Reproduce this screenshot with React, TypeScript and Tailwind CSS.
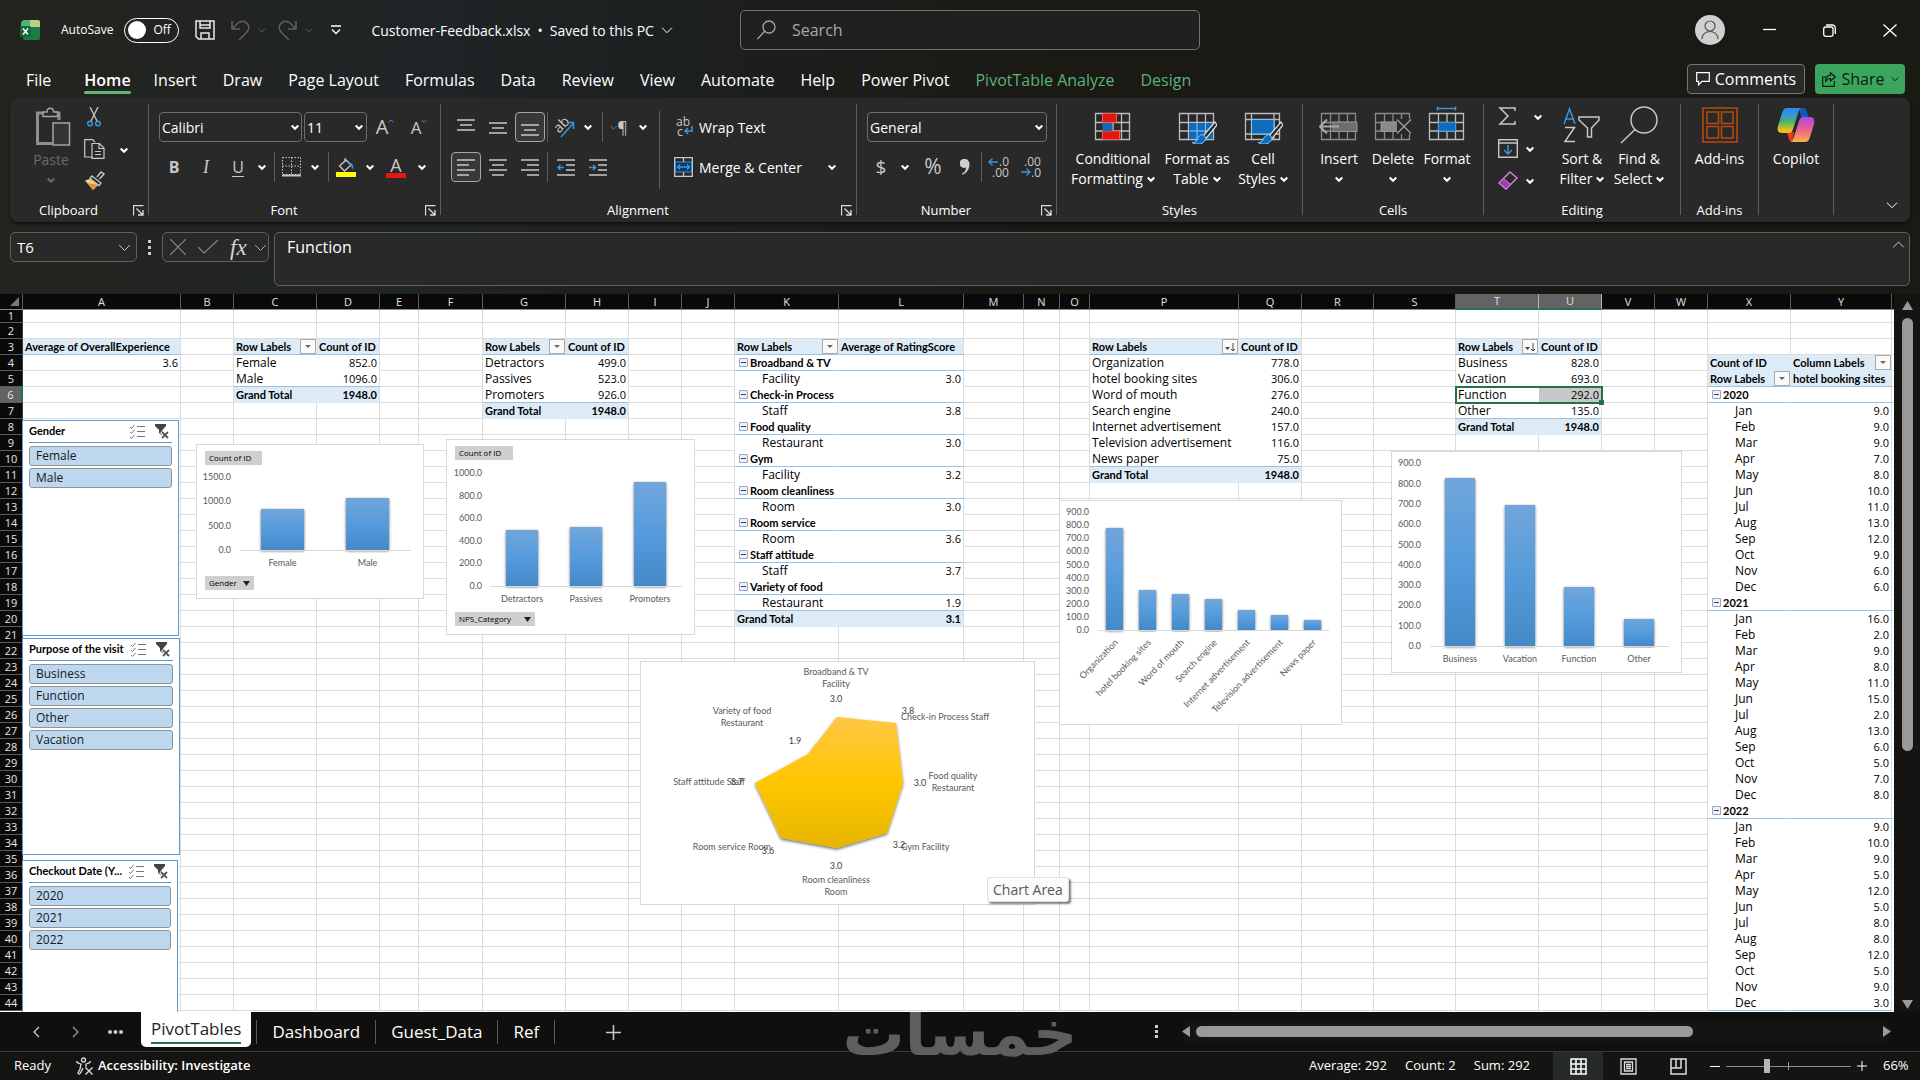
import React from "react";

type Kind = "body" | "edge" | "head" | "headTop" | "total" | "group";
type Cell = { v: string; k: Kind; btn?: "drop" | "sort"; indent?: boolean };

const COLS: [string, number][] = [
  ["A", 158], ["B", 53], ["C", 83], ["D", 63], ["E", 39], ["F", 64], ["G", 83], ["H", 63], ["I", 53],
  ["J", 53], ["K", 104], ["L", 125], ["M", 60], ["N", 36], ["O", 30], ["P", 149], ["Q", 63], ["R", 72],
  ["S", 82], ["T", 83], ["U", 63], ["V", 53], ["W", 53], ["X", 83], ["Y", 101],
];

const cells: Record<string, Cell> = {};

function pivot(a: string, b: string, start: number, btn: "drop" | "sort", heads: [string, string], rows: [string, string][]) {
  cells[a + start] = { v: heads[0], k: "head", btn };
  cells[b + start] = { v: heads[1], k: "head" };
  rows.forEach(([l, v], i) => {
    const r = start + 1 + i;
    const last = i === rows.length - 1;
    const group = v === "";
    const k: Kind = last ? "total" : group ? "group" : i === rows.length - 2 ? "edge" : "body";
    cells[a + r] = { v: l.trim(), k, indent: l.startsWith(" ") };
    cells[b + r] = { v, k };
  });
}

cells.A3 = { v: "Average of OverallExperience", k: "head" };
pivot("C", "D", 3, "drop", ["Row Labels", "Count of ID"], [["Female", "852.0"], ["Male", "1096.0"], ["Grand Total", "1948.0"]]);
pivot("G", "H", 3, "drop", ["Row Labels", "Count of ID"], [["Detractors", "499.0"], ["Passives", "523.0"], ["Promoters", "926.0"], ["Grand Total", "1948.0"]]);
pivot("K", "L", 3, "drop", ["Row Labels", "Average of RatingScore"], [
  ["Broadband & TV", ""], [" Facility", "3.0"], ["Check-in Process", ""], [" Staff", "3.8"], ["Food quality", ""], [" Restaurant", "3.0"],
  ["Gym", ""], [" Facility", "3.2"], ["Room cleanliness", ""], [" Room", "3.0"], ["Room service", ""], [" Room", "3.6"],
  ["Staff attitude", ""], [" Staff", "3.7"], ["Variety of food", ""], [" Restaurant", "1.9"], ["Grand Total", "3.1"],
]);
pivot("P", "Q", 3, "sort", ["Row Labels", "Count of ID"], [
  ["Organization", "778.0"], ["hotel booking sites", "306.0"], ["Word of mouth", "276.0"], ["Search engine", "240.0"],
  ["Internet advertisement", "157.0"], ["Television advertisement", "116.0"], ["News paper", "75.0"], ["Grand Total", "1948.0"],
]);
pivot("T", "U", 3, "sort", ["Row Labels", "Count of ID"], [["Business", "828.0"], ["Vacation", "693.0"], ["Function", "292.0"], ["Other", "135.0"], ["Grand Total", "1948.0"]]);

const MONTHS = ["Jan", "Feb", "Mar", "Apr", "May", "Jun", "Jul", "Aug", "Sep", "Oct", "Nov", "Dec"];
const YEARS: [string, number[]][] = [
  ["2020", [9, 9, 9, 7, 8, 10, 11, 13, 12, 9, 6, 6]],
  ["2021", [16, 2, 9, 8, 11, 15, 2, 13, 6, 5, 7, 8]],
  ["2022", [9, 10, 9, 5, 12, 5, 8, 8, 12, 5, 9, 3]],
];
cells.X4 = { v: "Count of ID", k: "headTop" };
cells.Y4 = { v: "Column Labels", k: "headTop", btn: "drop" };
cells.X5 = { v: "Row Labels", k: "head", btn: "drop" };
cells.Y5 = { v: "hotel booking sites", k: "head" };
YEARS.forEach(([y, vals], yi) => {
  const r0 = 6 + yi * 13;
  cells["X" + r0] = { v: y, k: "group" };
  cells["Y" + r0] = { v: "", k: "group" };
  vals.forEach((n, i) => {
    const k: Kind = yi === 2 && i === 11 ? "edge" : "body";
    cells["X" + (r0 + 1 + i)] = { v: MONTHS[i], k, indent: true };
    cells["Y" + (r0 + 1 + i)] = { v: n.toFixed(1), k };
  });
});

const KIND: Record<Kind, string> = {
  body: "border-b-white text-[12px]",
  edge: "border-b-[#9bc2e6] text-[12px]",
  head: "bg-[#ddebf7] border-b-[#9bc2e6] font-[Lato] text-[11px] font-bold",
  headTop: "bg-[#ddebf7] border-b-[#ddebf7] font-[Lato] text-[11px] font-bold",
  total: "bg-[#ddebf7] border-b-[#ddebf7] font-[Lato] text-[11px] font-bold",
  group: "border-b-[#9bc2e6] font-[Lato] text-[11px] font-bold",
};
const FIRST = "ACGKPTX";

function SheetCell({ id, col }: { id: string; col: string }) {
  if (id === "A4") return <td className="h-4 border-r border-b border-[#dcdcdc] pr-[2px] text-right text-[11px] leading-[15px]">3.6</td>;
  const c = cells[id];
  if (!c) return <td className="border-r border-b border-[#dcdcdc] p-0" />;
  const left = FIRST.includes(col);
  const header = c.k === "head" || c.k === "headTop";
  const numeric = !left && !header;
  const right = left && id !== "A3" ? (header || c.k === "total" ? "border-r-[#ddebf7]" : "border-r-white") : "border-r-[#dcdcdc]";
  return (
    <td className={`border-r border-b p-0 leading-[15px] whitespace-nowrap ${KIND[c.k]} ${right} ${id === "U6" ? "bg-[#c8c8c8]" : ""}`}>
      <div className={`flex h-[15px] items-center ${numeric ? "justify-end pr-[2px] text-[11px]" : header ? "justify-between pl-[2px]" : left && c.k === "group" ? "gap-[2px] pl-1" : c.indent ? "pl-[27px]" : "pl-[2px]"}`}>
        {left && c.k === "group" && (
          <button aria-label={"Collapse " + c.v} className="mb-px flex size-[9px] shrink-0 items-center justify-center rounded-[1px] border border-[#9aa7b8] bg-[#eef2f8]">
            <span className="h-px w-[5px] bg-[#1f3f8f]" />
          </button>
        )}
        <span>{c.v}</span>
        {c.btn && (
          <button aria-label={"Filter " + c.v} className="flex h-[15px] w-4 shrink-0 items-center justify-center border border-[#ababab] bg-[#fafafa]">
            {c.btn === "drop" ? (
              <svg width="8" height="4" viewBox="0 0 8 4"><path d="M1 0h6L4 3z" fill="#666" /></svg>
            ) : (
              <svg width="11" height="10" viewBox="0 0 11 10"><path d="M0 5h5L2.500 8z" fill="#444" /><path d="M8 1v8M6 7l2 2 2-2" stroke="#444" fill="none" /></svg>
            )}
          </button>
        )}
      </div>
    </td>
  );
}

function Sheet() {
  return (
    <table className="w-full table-fixed border-separate border-spacing-0 bg-white text-black">
      <colgroup>
        <col className="w-[23px]" />
        {COLS.map(([c, w]) => <col key={c} style={{ width: w }} />)}
        <col />
      </colgroup>
      <thead>
        <tr className="h-4 bg-[#0a0a0a] text-[11px] leading-[15px] text-[#e0e0e0]">
          <th className="border-r border-b border-r-[#5a5a5a] border-b-[#8a8a8a] p-0">
            <svg className="mr-[3px] ml-auto" width="9" height="9" viewBox="0 0 9 9"><path d="M9 0v9H0z" fill="#7a7a7a" /></svg>
          </th>
          {COLS.map(([c]) => (
            <th key={c} scope="col" className={`border-r p-0 font-normal ${c === "T" || c === "U" ? "border-b-2 border-r-[#b5b5b5] border-b-[#217346] bg-[#636363] leading-[14px]" : "border-b border-r-[#5a5a5a] border-b-[#8a8a8a]"}`}>{c}</th>
          ))}
          <th className="border-b border-b-[#8a8a8a] p-0" />
        </tr>
      </thead>
      <tbody>
        {Array.from({ length: 44 }, (_, i) => i + 1).map((r) => (
          <tr key={r} className={r === 1 ? "h-[13px]" : "h-4"}>
            <th scope="row" className={`border-r border-b border-b-[#5a5a5a] p-0 text-center text-[11px] font-normal text-[#e6e6e6] ${r === 1 ? "leading-[12px]" : "leading-[15px]"} ${r === 6 ? "border-r-2 border-r-[#217346] bg-[#636363]" : "border-r-[#3a3a3a] bg-[#0a0a0a]"}`}>{r}</th>
            {COLS.map(([c]) => <SheetCell key={c} id={c + r} col={c} />)}
            <td className="border-b border-[#dcdcdc] p-0" />
          </tr>
        ))}
      </tbody>
    </table>
  );
}

function Slicer({ title, items, place }: { title: string; items: string[]; place: string }) {
  return (
    <section aria-label={title} className={`absolute left-[22px] border border-[#5b9bd5] bg-white px-[6px] text-black ${place}`}>
      <div className="flex h-[22px] items-center border-b border-[#5b9bd5]">
        <h2 className="flex-1 truncate font-[Lato] text-[11px] font-bold">{title}</h2>
        <button aria-label="Multi-select" className="mr-2">
          <svg width="17" height="15" viewBox="0 0 17 15" fill="none" stroke="#777"><path d="M1 3l1.500 1.500L5.500 1M1 8l1.500 1.500L5.500 6M1 13l1.500 1.500L5.500 11M8 2.500h8M8 7.500h8M8 12.500h8" /></svg>
        </button>
        <button aria-label="Clear filter" className="mr-[2px]">
          <svg width="16" height="15" viewBox="0 0 16 15"><path d="M1 0h11v2L8.500 6v6L5 9V6L1 2z" fill="#444" /><path d="M7.500 7.500l7 7M14.500 7.500l-7 7" stroke="#fff" strokeWidth="4" /><path d="M8 8l6 6M14 8l-6 6" stroke="#555" strokeWidth="1.800" /></svg>
        </button>
      </div>
      <div className="flex flex-col gap-[2px] pt-[3px]">
        {items.map((t) => (
          <button key={t} className="h-5 rounded-[3px] border border-[#8f959b] bg-[#bdd7ee] pl-[6px] text-left text-[12px] leading-[18px] text-[#1a1a1a]">{t}</button>
        ))}
      </div>
    </section>
  );
}

type Bar = { x: number; top: number; label: string };
type ChartProps = {
  name: string; place: string; w: number; h: number; ticks: string[]; tickX: number; y0: number; step: number;
  axis: [number, number]; barW: number; bars: Bar[]; slant?: boolean; children?: React.ReactNode;
};

function BarChart({ name, place, w, h, ticks, tickX, y0, step, axis, barW, bars, slant, children }: ChartProps) {
  const id = "g" + name;
  return (
    <div className={`absolute border border-[#d9d9d9] bg-white ${place}`}>
      <svg width={w} height={h} viewBox={`0 0 ${w} ${h}`} role="img" aria-label={name + " chart"} fontFamily="Lato, sans-serif" fontSize="9" fill="#595959">
        <defs>
          <linearGradient id={id} x1="0" y1="0" x2="0" y2="1"><stop offset="0" stopColor="#71a6db" /><stop offset=".5" stopColor="#559bdb" /><stop offset="1" stopColor="#438ac9" /></linearGradient>
          <filter id={id + "s"} x="-20%" y="-5%" width="140%" height="110%"><feDropShadow dx="0" dy="1" stdDeviation="1.500" floodOpacity=".6" /></filter>
        </defs>
        {ticks.map((t, i) => <text key={t} x={tickX} y={y0 - i * step + 3} textAnchor="end">{t}</text>)}
        {bars.map((b) => <rect key={b.label} x={b.x} y={b.top} width={barW} height={y0 - b.top} fill={`url(#${id})`} filter={`url(#${id}s)`} />)}
        <path d={`M${axis[0]} ${y0 + 0.5}H${axis[1]}`} stroke="#d9d9d9" />
        {bars.map((b) => slant
          ? <text key={b.label} x={b.x + barW / 2 + 4} y={y0 + 13} textAnchor="end" transform={`rotate(-46 ${b.x + barW / 2 + 4} ${y0 + 13})`}>{b.label}</text>
          : <text key={b.label} x={b.x + barW / 2} y={y0 + 16} textAnchor="middle">{b.label}</text>)}
      </svg>
      {children}
    </div>
  );
}

function FieldButton({ text, drop, place }: { text: string; drop?: boolean; place: string }) {
  return (
    <button className={`absolute flex h-[14px] items-center justify-between bg-[#cfcfcf] px-1 text-[8px] leading-none text-black ${place}`}>
      <span>{text}</span>
      {drop && <svg width="7" height="5" viewBox="0 0 7 5"><path d="M0 0h7L3.500 5z" fill="#222" /></svg>}
    </button>
  );
}

const RADAR: [number, number, string, "start" | "middle" | "end"][] = [
  [195, 14, "Broadband & TV", "middle"], [195, 26, "Facility", "middle"], [195, 41, "3.0", "middle"],
  [267, 53, "3.8", "middle"], [260, 59, "Check-in Process Staff", "start"],
  [312, 118, "Food quality", "middle"], [312, 130, "Restaurant", "middle"], [279, 125, "3.0", "middle"],
  [258, 187, "3.2", "middle"], [260, 189, "Gym Facility", "start"],
  [195, 208, "3.0", "middle"], [195, 222, "Room cleanliness", "middle"], [195, 234, "Room", "middle"],
  [130, 189, "Room service Room", "end"], [127, 193, "3.6", "middle"],
  [104, 124, "Staff attitude Staff", "end"], [96, 124, "3.7", "middle"],
  [154, 83, "1.9", "middle"], [101, 53, "Variety of food", "middle"], [101, 65, "Restaurant", "middle"],
];

function RadarChart() {
  return (
    <div className="absolute top-[367px] left-[640px] border border-[#d9d9d9] bg-white">
      <svg width="393" height="242" viewBox="0 0 393 242" role="img" aria-label="Rating by category chart" fontFamily="Lato, sans-serif" fontSize="9" fill="#595959">
        <defs>
          <linearGradient id="gold" x1="0" y1="0" x2="0" y2="1"><stop offset="0" stopColor="#ffc746" /><stop offset=".5" stopColor="#ffc600" /><stop offset="1" stopColor="#e5b600" /></linearGradient>
          <filter id="golds" x="-10%" y="-10%" width="120%" height="120%"><feDropShadow dx="0" dy="1.500" stdDeviation="1.500" floodOpacity=".6" /></filter>
        </defs>
        <path d="M196 55L255 61L262 121L246 171L196 186L140 176L114 121L167 92Z" fill="url(#gold)" filter="url(#golds)" />
        {RADAR.map(([x, y, t, a], i) => <text key={i} x={x} y={y - 1} textAnchor={a} fill={/^\d/.test(t) ? "#404040" : "#595959"}>{t}</text>)}
      </svg>
    </div>
  );
}

function Chev({ s = 8, c = "currentColor", w = 2, up }: { s?: number; c?: string; w?: number; up?: boolean }) {
  return <svg className="shrink-0" width={s} height={s} viewBox="0 0 8 8" fill="none" stroke={c} strokeWidth={(w * 8) / s}><path d={up ? "M.700 5.800L4 2.500l3.300 3.300" : "M.700 2.500L4 5.800l3.300-3.300"} /></svg>;
}

function IconBtn({ label, w = "w-8", boxed, children }: { label: string; w?: string; boxed?: boolean; children: React.ReactNode }) {
  return <button aria-label={label} className={`flex h-[30px] shrink-0 items-center justify-center rounded-[4px] ${w} ${boxed ? "border border-[#a6a6a6] bg-[#383838]" : ""}`}>{children}</button>;
}

const Div = ({ m = "" }: { m?: string }) => <span className={`h-[30px] w-px shrink-0 bg-[#5c5c5c] ${m}`} />;

function Group({ label, w, launcher, children }: { label: string; w: string; launcher?: boolean; children: React.ReactNode }) {
  return (
    <section aria-label={label || "Copilot"} className={`flex shrink-0 ${w}`}>
      <div className="flex min-w-0 flex-1 flex-col">
        <div className="flex h-[102px]">{children}</div>
        <div className="flex h-5 items-center">
          <h2 className={`flex-1 text-center text-[13px] leading-5 ${launcher ? "pr-[6px]" : ""}`}>{label}</h2>
          {launcher && (
            <button aria-label={label + " settings"} className="mr-1">
              <svg width="11" height="11" viewBox="0 0 11 11" fill="none" stroke="#ddd"><path d="M.500 10.500V.500h10M3.500 3.500l6 6M10 5v5H5" strokeWidth="1.300" /></svg>
            </button>
          )}
        </div>
      </div>
      <span className="mt-[6px] h-[111px] w-px bg-[#5c5c5c]" />
    </section>
  );
}

function BigBtn({ icon, lines, w, chev, below }: { icon: React.ReactNode; lines: string[]; w: string; chev?: boolean; below?: boolean }) {
  return (
    <button className={`flex shrink-0 flex-col items-center pt-[7px] text-[14px] leading-5 ${w}`}>
      <span className="mb-1 flex h-10 items-center justify-center">{icon}</span>
      {lines.map((l, i) => (
        <span key={l} className="flex items-center gap-1 whitespace-nowrap">{l}{chev && i === lines.length - 1 && <Chev />}</span>
      ))}
      {below && <span className="pt-[6px]"><Chev /></span>}
    </button>
  );
}

const G = "#c8c8c8";
const B = "#3a96dd";

const Lines = ({ d }: { d: string }) => <svg width="18" height="18" viewBox="0 0 18 18" stroke={G} strokeWidth="1.500"><path d={d} /></svg>;

const GridIcon = ({ children, dim }: { children?: React.ReactNode; dim?: boolean }) => (
  <svg width="40" height="38" viewBox="0 0 40 38" fill="none">
    <path d="M2.500 7.500h34v26h-34zM11.500 7.500v26M28.500 7.500v26M20 7.500v26M2.500 16.500h34M2.500 25h34" stroke={dim ? "#8a8a8a" : "#bdbdbd"} strokeWidth="1.300" />
    {children}
  </svg>
);
const Brush = () => (
  <g><path d="M38 16L26 30l3 2.500L40 19z" fill="#292929" stroke="#e0e0e0" strokeWidth="1.200" /><path d="M27 29c-4-1-6 2-7 5-1 2-3 2.500-5 2.500 5 3 12 2 14-4z" fill="#0f6cbd" stroke="#8cc4f0" strokeWidth="1" /></g>
);

function Ribbon() {
  return (
    <div className="mx-[10px] flex h-[124px] rounded-lg bg-[#292929] text-white shadow-[0_2px_3px_rgba(0,0,0,0.500)]">
      <Group label="Clipboard" w="w-[139px]" launcher>
        <button disabled className="ml-[19px] flex w-11 flex-col items-center pt-[9px] text-[14px] leading-5 text-[#6b6b6b]">
          <svg className="ml-[3px]" width="36" height="41" viewBox="0 0 36 41" fill="none" stroke="#a6a6a6"><path d="M8 6H2.500v30.500H17M24 13V6h-5" strokeWidth="3" stroke="#8f8f8f" /><path d="M8 9.500V5h4c0-5 6.500-5 6.500 0h4v4.500z" strokeWidth="1.400" fill="#292929" /><rect x="18" y="16" width="16.500" height="22" fill="#333" strokeWidth="1.500" /></svg>
          <span className="pt-[2px]">Paste</span>
          <span className="pt-[6px]"><Chev c="#6b6b6b" /></span>
        </button>
        <div className="ml-[10px] flex flex-col gap-3 pt-[9px]">
          <button aria-label="Cut" className="flex h-5 w-[22px] items-center justify-center"><svg width="14" height="20" viewBox="0 0 14 20" fill="none"><path d="M3 0l7 14M11 0L4 14" stroke={G} strokeWidth="1.300" /><circle cx="3" cy="16.500" r="2.300" stroke={B} strokeWidth="1.500" /><circle cx="11" cy="16.500" r="2.300" stroke={B} strokeWidth="1.500" /></svg></button>
          <button aria-label="Copy" className="flex h-5 w-[22px] items-center justify-center"><svg width="21" height="20" viewBox="0 0 21 20" fill="none" stroke={G} strokeWidth="1.200"><path d="M8 18H.700V.700h8L11 3M8 4.500h7.500l4.500 4.500v10.300H8zM15 4.500V9.500h5M11 12.500h6M11 15.500h6" /></svg></button>
          <button aria-label="Format Painter" className="flex h-5 w-[22px] items-center justify-center"><svg width="21" height="20" viewBox="0 0 21 20" fill="none"><path d="M13 6l4-5 3 2-4.500 5" stroke={G} strokeWidth="1.400" /><path d="M8 5l9 7-2 2.500L6 7.500z" stroke={G} strokeWidth="1.300" fill="#292929" /><path d="M5.500 8L1 9.500l8 9.500 5-5z" fill="#f3d27a" /><path d="M4 12l10 2-5 5z" fill="#e8912d" /></svg></button>
        </div>
        <button aria-label="Copy options" className="mt-10 ml-[11px] flex h-6 w-4 items-center justify-center"><Chev /></button>
      </Group>

      <Group label="Font" w="w-[292px]" launcher>
        <div className="flex flex-col gap-[10px] pt-[14px]">
          <div className="flex pl-[10px]">
            <label className="relative mr-[2px] flex items-center">
              <select aria-label="Font" className="h-[30px] w-[143px] appearance-none rounded-[4px] border border-[#6e6e6e] px-[2px] text-[14px]"><option>Calibri</option></select>
              <span className="pointer-events-none absolute right-[3px]"><Chev /></span>
            </label>
            <label className="relative flex items-center">
              <select aria-label="Font size" className="h-[30px] w-[63px] appearance-none rounded-[4px] border border-[#6e6e6e] px-[2px] text-[14px]"><option>11</option></select>
              <span className="pointer-events-none absolute right-[4px]"><Chev /></span>
            </label>
            <IconBtn label="Increase font size" w="w-9"><span className="text-[20px] leading-none text-[#c8c8c8]">A</span><span className="mb-3"><Chev s={6} c={B} w={1} up /></span></IconBtn>
            <IconBtn label="Decrease font size" w="w-8"><span className="text-[17px] leading-none text-[#c8c8c8]">A</span><span className="mb-3"><Chev s={6} c={B} w={1} /></span></IconBtn>
          </div>
          <div className="flex pl-[9px] text-[16px] text-[#c8c8c8]">
            <IconBtn label="Bold"><b>B</b></IconBtn>
            <IconBtn label="Italic"><i className="font-['Liberation_Serif'] text-[18px]">I</i></IconBtn>
            <IconBtn label="Underline"><span className="border-b border-[#c8c8c8] leading-[18px]">U</span></IconBtn>
            <IconBtn label="Underline options" w="w-4"><Chev c="#fff" /></IconBtn>
            <Div m="mx-1" />
            <IconBtn label="Borders" w="w-6"><svg width="19" height="20" viewBox="0 0 19 20" stroke={G} fill="none"><path d="M.500.500h18v17H.500zM9.500.500v17M.500 9h18" strokeDasharray="1.500 1.500" /><path d="M0 18.500h19" strokeWidth="2" /></svg></IconBtn>
            <IconBtn label="Border options" w="w-6"><Chev c="#fff" /></IconBtn>
            <Div m="mx-[1px]" />
            <IconBtn label="Fill color"><svg width="20" height="20" viewBox="0 0 20 20" fill="none"><path d="M9 1v4M10 3L3.500 9l5 5L15 8z" stroke={G} strokeWidth="1.300" /><path d="M13 6c3-1 5 2 4 7l-2-4z" fill={B} /><path d="M0 15h20v5H0z" fill="#ff0" /></svg></IconBtn>
            <IconBtn label="Fill color options" w="w-4"><Chev c="#fff" /></IconBtn>
            <IconBtn label="Font color" w="w-9"><span className="flex w-5 flex-col items-center border-b-[5px] border-[#e3170d] text-[18px] leading-[16px]">A</span></IconBtn>
            <IconBtn label="Font color options" w="w-4"><Chev c="#fff" /></IconBtn>
          </div>
        </div>
      </Group>

      <Group label="Alignment" w="w-[416px]" launcher>
        <div className="flex flex-col gap-[10px] pt-[14px] pl-[10px]">
          <div className="flex gap-[2px]">
            <IconBtn label="Top align" w="w-[30px]"><Lines d="M0 2h18M3 7h12M0 12h18" /></IconBtn>
            <IconBtn label="Middle align" w="w-[30px]"><Lines d="M0 5h18M3 10h12M0 15h18" /></IconBtn>
            <IconBtn label="Bottom align" w="w-[30px]" boxed><Lines d="M0 7h18M3 12h12M0 17h18" /></IconBtn>
            <Div />
            <div className="flex">
              <IconBtn label="Orientation" w="w-7"><svg className="overflow-visible" width="22" height="22" viewBox="0 0 22 22" fill="none"><text x="1" y="14" fontSize="14" fill={G} transform="rotate(-45 8 10)">ab</text><path d="M8 21L20 7.500M14 6.500h6.500V13" stroke={B} strokeWidth="1.500" /></svg></IconBtn>
              <IconBtn label="Orientation options" w="w-5"><Chev /></IconBtn>
              <Div m="ml-1" />
              <IconBtn label="Text direction"><Chev s={7} c={B} w={1} /><span className="text-[16px] text-[#c8c8c8]">¶</span></IconBtn>
              <IconBtn label="Text direction options" w="w-4"><Chev /></IconBtn>
            </div>
          </div>
          <div className="flex gap-[2px]">
            <IconBtn label="Align left" w="w-[30px]" boxed><Lines d="M0 2h18M0 7h12M0 12h18M0 17h12" /></IconBtn>
            <IconBtn label="Center" w="w-[30px]"><Lines d="M0 2h18M3 7h12M0 12h18M3 17h12" /></IconBtn>
            <IconBtn label="Align right" w="w-[30px]"><Lines d="M0 2h18M6 7h12M0 12h18M6 17h12" /></IconBtn>
            <Div />
            <div className="flex">
              <IconBtn label="Decrease indent"><svg width="18" height="18" viewBox="0 0 18 18" fill="none" strokeWidth="1.500"><path d="M0 2h18M9 7h9M9 12h9M0 17h18" stroke={G} /><path d="M7 9.500H1M3.500 7L1 9.500 3.500 12" stroke={B} /></svg></IconBtn>
              <IconBtn label="Increase indent"><svg width="18" height="18" viewBox="0 0 18 18" fill="none" strokeWidth="1.500"><path d="M0 2h18M9 7h9M9 12h9M0 17h18" stroke={G} /><path d="M0 9.500h6M4 7l2.500 2.500L4 12" stroke={B} /></svg></IconBtn>
            </div>
          </div>
        </div>
        <span className="mt-[13px] ml-2 h-[78px] w-px bg-[#5c5c5c]" />
        <div className="flex flex-col gap-[10px] pt-[14px] pl-[14px] text-[14px]">
          <button className="flex h-[30px] items-center gap-[6px]">
            <svg className="overflow-visible" width="19" height="20" viewBox="0 0 19 20" fill="none"><text x="2" y="9" fontSize="12" fill={G}>ab</text><text x="3" y="19" fontSize="12" fill={G}>c</text><path d="M18 9v5H11M14 11l-3 3 3 3" stroke={B} strokeWidth="1.500" /></svg>
            Wrap Text
          </button>
          <div className="flex items-center">
            <button className="flex h-[30px] items-center gap-[6px]">
              <svg width="19" height="20" viewBox="0 0 19 20" fill="none" stroke={G}><path d="M.700.700h17.600v18.600H.700zM9.500 0v5M9.500 15v5" strokeWidth="1.300" /><rect x="1.500" y="5" width="16" height="10" stroke={B} fill="#0b3a63" /><path d="M4 10h11M6 7.500L3.500 10 6 12.500M13 7.500l2.500 2.500-2.500 2.500" stroke={B} strokeWidth="1.300" /></svg>
              Merge & Center
            </button>
            <button aria-label="Merge options" className="ml-[22px] flex size-4 items-center justify-center"><Chev /></button>
          </div>
        </div>
      </Group>

      <Group label="Number" w="w-[200px]" launcher>
        <div className="flex flex-col gap-[10px] pt-[14px] pl-[10px]">
          <label className="relative flex items-center">
            <select aria-label="Number format" className="h-[30px] w-[180px] appearance-none rounded-[4px] border border-[#6e6e6e] px-[2px] text-[14px]"><option>General</option></select>
            <span className="pointer-events-none absolute right-1"><Chev /></span>
          </label>
          <div className="flex pl-[2px] text-[#c8c8c8]">
            <IconBtn label="Accounting format" w="w-6"><span className="text-[19px]">$</span></IconBtn>
            <IconBtn label="Accounting options" w="w-6"><Chev c="#fff" /></IconBtn>
            <IconBtn label="Percent style"><span className="text-[21px]">%</span></IconBtn>
            <IconBtn label="Comma style"><svg width="10" height="16" viewBox="0 0 10 16" fill="#d0d0d0"><path d="M5 0a4.500 4.500 0 1 0 1 8.500C6 12 4 13.500 2 14.500l.500 1.200C7 14 9.500 10 9.500 5 9.500 2 7.500 0 5 0z" /></svg></IconBtn>
            <Div />
            <IconBtn label="Increase decimal"><svg className="overflow-visible" width="21" height="20" viewBox="0 0 21 20" fill="none"><path d="M10 5H1M4.500 1.500L1 5l3.500 3.500" stroke={B} strokeWidth="1.300" /><text x="11" y="9" fontSize="12" fill={G}>.0</text><text x="4" y="20" fontSize="12" fill={G}>.00</text></svg></IconBtn>
            <IconBtn label="Decrease decimal"><svg className="overflow-visible" width="21" height="20" viewBox="0 0 21 20" fill="none"><path d="M1 15h9M6.500 11.500L10 15l-3.500 3.500" stroke={B} strokeWidth="1.300" /><text x="4" y="9" fontSize="12" fill={G}>.00</text><text x="11" y="20" fontSize="12" fill={G}>.0</text></svg></IconBtn>
          </div>
        </div>
      </Group>

      <Group label="Styles" w="w-[246px]">
        <span className="w-[10px]" />
        <BigBtn w="w-[92px]" lines={["Conditional", "Formatting"]} chev icon={<GridIcon><path d="M9.500 7.500h14v9h-14zM9.500 25h17v8.500h-17z" fill="#e3170d" stroke="#f25c54" /><path d="M9.500 17h9.500v8H9.500z" fill="#0f6cbd" /></GridIcon>} />
        <BigBtn w="w-[76px]" lines={["Format as", "Table"]} chev icon={<GridIcon><path d="M12 17h24v16H12z" fill="#0f6cbd" /><path d="M20 17v16M28.500 17v16M12 25h24" stroke="#8cc4f0" /><Brush /></GridIcon>} />
        <BigBtn w="w-[56px]" lines={["Cell", "Styles"]} chev icon={
          <svg width="40" height="38" viewBox="0 0 40 38" fill="none">
            <path d="M2.500 7.500h34v26h-34zM8.500 7.500v26M31 7.500v26M2.500 13.500h34M2.500 28h34" stroke="#bdbdbd" strokeWidth="1.300" />
            <path d="M8.500 13.500H31V28H8.500z" fill="#0f6cbd" stroke="#8cc4f0" /><Brush />
          </svg>} />
      </Group>

      <Group label="Cells" w="w-[181px]">
        <span className="w-[8px]" />
        <BigBtn w="w-[56px]" lines={["Insert"]} below icon={<GridIcon dim><path d="M14 16h24v9.500H14z" fill="#6e6e6e" stroke="#999" /><path d="M20 20.500H1M8 13.500l-7 7 7 7" stroke="#a8a8a8" strokeWidth="2" /></GridIcon>} />
        <BigBtn w="w-[52px]" lines={["Delete"]} below icon={<GridIcon dim><path d="M8 16h17v9.500H8z" fill="#8a8a8a" stroke="#999" /><path d="M24 13h14v15H24z" fill="#292929" /><path d="M24 13.500l14 14M38 13.500l-14 14" stroke="#999" strokeWidth="1.500" /></GridIcon>} />
        <BigBtn w="w-[56px]" lines={["Format"]} below icon={<GridIcon><path d="M11.500 16.500h17V25h-17z" fill="#0f6cbd" stroke={B} /><path d="M10 2.500h19M10.500.500v4M28.500.500v4" stroke={B} strokeWidth="1.500" /></GridIcon>} />
      </Group>

      <Group label="Editing" w="w-[197px]">
        <div className="flex w-[68px] flex-col gap-[13px] pt-[9px] pl-[14px]">
          <button aria-label="AutoSum" className="flex h-[19px] items-center"><svg width="20" height="19" viewBox="0 0 20 19" fill="none" stroke={G} strokeWidth="1.500"><path d="M17 4V1H2l8 8-8 8h15v-3" /></svg><span className="ml-4"><Chev /></span></button>
          <button aria-label="Fill" className="flex h-[19px] items-center"><svg width="20" height="19" viewBox="0 0 20 19" fill="none"><path d="M.700.700h18.600v17.600H.700zM.700 4h18.600" stroke={G} strokeWidth="1.400" /><path d="M10 6v9M6 11l4 4 4-4" stroke={B} strokeWidth="1.500" /></svg><span className="ml-2"><Chev /></span></button>
          <button aria-label="Clear" className="flex h-[19px] items-center"><svg width="20" height="19" viewBox="0 0 20 19"><path d="M12 1l7 6-11 11-7-6z" fill="#292929" stroke="#d68be0" strokeWidth="1.400" /><path d="M5.500 7.500L12.500 13.500 8 18l-7-6z" fill="#a33bb5" stroke="#d68be0" strokeWidth="1" /></svg><span className="ml-2"><Chev /></span></button>
        </div>
        <BigBtn w="w-[60px]" lines={["Sort &", "Filter"]} chev icon={<svg width="38" height="38" viewBox="0 0 38 38" fill="none"><path d="M1 18L6.500 3 12 18M3 13h7" stroke={B} strokeWidth="1.500" /><path d="M2 21.500h9.500L2 35.500h10" stroke={G} strokeWidth="1.500" /><path d="M16 11h20v3l-7.500 8v9h-4v-9L16 14z" stroke={G} strokeWidth="1.500" /></svg>} />
        <BigBtn w="w-[54px]" lines={["Find &", "Select"]} chev icon={<svg width="38" height="38" viewBox="0 0 38 38" fill="none" stroke={G} strokeWidth="1.500"><circle cx="24" cy="14" r="13" /><path d="M15 23.500L1 37" /></svg>} />
      </Group>

      <Group label="Add-ins" w="w-[78px]">
        <BigBtn w="w-[77px]" lines={["Add-ins"]} icon={<svg width="36" height="36" viewBox="0 0 36 36" fill="none" stroke="#b8480f" strokeWidth="1.600"><path d="M1 1h34v34H1zM5 5h11.500v11.500H5zM19.500 5H31v11.500H19.500zM5 19.500h11.500V31H5zM19.500 19.500H31V31H19.500z" /></svg>} />
      </Group>
      <Group label="" w="w-[75px]">
        <BigBtn w="w-[74px]" lines={["Copilot"]} icon={
          <svg width="38" height="36" viewBox="0 0 38 36">
            <defs>
              <linearGradient id="cp1" x1="0" y1="0" x2="0" y2="1"><stop offset=".2" stopColor="#2f8fe8" /><stop offset=".55" stopColor="#4bb56a" /><stop offset=".9" stopColor="#f2c014" /></linearGradient>
              <linearGradient id="cp2" x1="0" y1="0" x2="0" y2="1"><stop offset=".1" stopColor="#b44fd8" /><stop offset=".5" stopColor="#ee5f8c" /><stop offset="1" stopColor="#f7b04a" /></linearGradient>
            </defs>
            <path d="M22 1h4c2 0 3.500 2 4 4l1.500 5H24z" fill="#0b5cb8" />
            <path d="M10 25h7l-1 5c0 3-1 5 1 5h-2c-2 0-3-2-3.500-4z" fill="#e33b1f" />
            <path d="M10 1h15c-2 0-3 2-3.500 4L16 22c-1 3-2 4-5 4H5c-4 0-5-3-4-7L5 6c1-3 2-5 5-5z" fill="url(#cp1)" />
            <path d="M28 35H13c2 0 3-2 3.500-4L22 14c1-3 2-4 5-4h6c4 0 5 3 4 7l-4 13c-1 3-2 5-5 5z" fill="url(#cp2)" />
          </svg>} />
      </Group>
      <button aria-label="Collapse ribbon" className="mt-auto mr-3 mb-[11px] ml-auto"><Chev s={12} w={1} /></button>
    </div>
  );
}

const TABS = ["Insert", "Draw", "Page Layout", "Formulas", "Data", "Review", "View", "Automate", "Help", "Power Pivot"];

function TitleBar() {
  return (
    <header className="flex h-[60px] items-center text-[14px] text-white">
      <svg className="ml-5" width="20" height="20" viewBox="0 0 20 20"><rect x="3" width="17" height="20" rx="2" fill="#1d7a45" /><path d="M5 0h7v7H1V4a4 4 0 0 1 4-4z" fill="#4fb57a" /><path d="M10 0h8a2 2 0 0 1 2 2v5H10z" fill="#b9cf85" /><rect y="6" width="11" height="11" rx="1.500" fill="#15683a" /><path d="M3 8.500l5 6M8 8.500l-5 6" stroke="#fff" strokeWidth="1.500" /></svg>
      <label className="ml-[21px] flex items-center gap-[11px] text-[12px]">
        AutoSave
        <span className="relative flex h-[25px] w-[55px] items-center">
          <input type="checkbox" role="switch" aria-label="AutoSave" className="absolute inset-0 appearance-none rounded-full border border-white" />
          <span className="pointer-events-none ml-1 size-[18px] rounded-full bg-white" />
          <span className="pointer-events-none ml-[7px]">Off</span>
        </span>
      </label>
      <button aria-label="Save" className="ml-4"><svg width="20" height="20" viewBox="0 0 20 20" fill="none" stroke="#e8e8e8" strokeWidth="1.500"><path d="M1 1h18v18H3.500L1 16.500zM5 1v7h10V1M6 19v-6h8v6M5 5h10" /></svg></button>
      <button aria-label="Undo" disabled className="ml-4 flex items-center gap-[8px] text-[#5f5f5f]"><svg width="19" height="21" viewBox="0 0 19 21" fill="none" stroke="#5f5f5f" strokeWidth="1.500"><path d="M1 1v8h8M1.500 8.500L7 3c7-5 14 3 9 9l-8 8" /></svg><Chev w={1} /></button>
      <button aria-label="Redo" disabled className="ml-3 flex items-center gap-[8px] text-[#5f5f5f]"><svg width="19" height="21" viewBox="0 0 19 21" fill="none" stroke="#5f5f5f" strokeWidth="1.500"><path d="M18 1v8h-8M17.500 8.500L12 3C5-2 -2 6 3 12l8 8" /></svg><Chev w={1} /></button>
      <button aria-label="Customize toolbar" className="ml-[18px]"><svg width="10" height="10" viewBox="0 0 10 10" fill="none" stroke="#fff" strokeWidth="1.300"><path d="M0 1h10M1 4.500l4 4 4-4" /></svg></button>
      <button className="ml-[30px] flex items-center gap-[7px] whitespace-nowrap">
        <span>Customer-Feedback.xlsx</span><span>•</span><span>Saved to this PC</span><Chev s={12} w={1} />
      </button>
      <label className="ml-[67px] flex h-10 w-[460px] items-center rounded-[5px] border border-[#6f6f6b] bg-[#1e2120] px-4">
        <svg width="20" height="20" viewBox="0 0 20 20" fill="none" stroke="#a5a5a5" strokeWidth="1.300"><circle cx="12" cy="7" r="6" /><path d="M7.500 11.500L.500 19" /></svg>
        <input type="search" aria-label="Search" placeholder="Search" className="ml-[15px] flex-1 bg-transparent text-[16px] outline-none placeholder:text-[#a8a8a8]" />
      </label>
      <div className="ml-auto flex items-center pr-[23px]">
        <button aria-label="Account" className="mr-[38px] flex size-[30px] items-center justify-center rounded-full bg-[#d0d0d0]"><svg width="18" height="20" viewBox="0 0 18 20" fill="none" stroke="#555" strokeWidth="1.200"><circle cx="9" cy="6" r="5" /><path d="M1 19c0-10 16-10 16 0" /></svg></button>
        <button aria-label="Minimize" className="mr-[47px]"><svg width="13" height="12" viewBox="0 0 13 12"><path d="M0 5.500h13" stroke="#fff" strokeWidth="1.300" /></svg></button>
        <button aria-label="Restore" className="mr-[47px]"><svg width="13" height="13" viewBox="0 0 13 13" fill="none" stroke="#fff" strokeWidth="1.300"><rect x=".700" y="3" width="9.300" height="9.300" rx="2" /><path d="M3 1h6a3 3 0 0 1 3.300 3v6" /></svg></button>
        <button aria-label="Close"><svg width="14" height="13" viewBox="0 0 14 13" stroke="#fff" strokeWidth="1.300"><path d="M.500.500l13 12M13.500.500l-13 12" /></svg></button>
      </div>
    </header>
  );
}

function TabRow() {
  return (
    <nav className="flex h-[38px] items-center pr-[15px] pl-[26px] text-[16px] whitespace-nowrap text-white">
      <div className="flex pt-[2px]">
        <a href="#file" className="mr-[33px]">File</a>
        <a href="#home" className="relative mr-[23px] font-semibold">Home<span className="absolute -bottom-[2px] left-0 h-[3px] w-full rounded bg-[#5fb878]" /></a>
        <div className="flex gap-[26px]">
          {TABS.map((t) => <a key={t} href={"#" + t}>{t}</a>)}
          <a href="#analyze" className="text-[#58b27a]">PivotTable Analyze</a>
          <a href="#design" className="text-[#58b27a]">Design</a>
        </div>
      </div>
      <div className="ml-auto flex gap-[10px]">
        <button className="flex h-[30px] w-[118px] items-center justify-center gap-[5px] rounded-[4px] border border-[#77756f] bg-[#292929]">
          <svg width="14" height="14" viewBox="0 0 14 14" fill="none" stroke="#fff" strokeWidth="1.200"><path d="M.700.700h12.600v8.600H6L2.500 13V9.300H.700z" /></svg>Comments
        </button>
        <button className="flex h-[30px] w-[90px] items-center justify-center gap-[6px] rounded-[4px] bg-[#3ba55d] text-[#0c1c12]">
          <svg width="14" height="15" viewBox="0 0 14 15" fill="none" stroke="#0c1c12" strokeWidth="1.200"><path d="M4 5H.700v9.300h11.600V9M8.500.800L13.300 5 8.500 9V6.500C6 6.500 4.500 8 3.500 10c0-4 1.500-6.500 5-6.800z" /></svg>Share<Chev w={1} />
        </button>
      </div>
    </nav>
  );
}

function FormulaBar() {
  return (
    <div className="mx-[10px] mt-[10px] mb-2 flex items-start text-white">
      <label className="relative flex items-center">
        <input aria-label="Name box" defaultValue="T6" className="h-[30px] w-[127px] rounded-[5px] border border-[#5f5f5f] bg-[#292929] px-[6px] text-[15px]" />
        <span className="absolute right-[6px]"><Chev s={13} w={1} c="#ccc" /></span>
      </label>
      <span className="flex h-[30px] w-[25px] flex-col items-center justify-center gap-[3px]"><i className="size-[3px] bg-[#ccc]" /><i className="size-[3px] bg-[#ccc]" /><i className="size-[3px] bg-[#ccc]" /></span>
      <div className="mr-[5px] flex h-[30px] w-[107px] items-center rounded-[5px] border border-[#5f5f5f] bg-[#292929] pl-[7px]">
        <button aria-label="Cancel" disabled><svg width="16" height="16" viewBox="0 0 16 16" stroke="#8a8a8a" strokeWidth="1.200"><path d="M0 0l16 16M16 0L0 16" /></svg></button>
        <button aria-label="Enter" disabled className="ml-3"><svg width="20" height="14" viewBox="0 0 20 14" fill="none" stroke="#8a8a8a" strokeWidth="1.200"><path d="M0 7l6 6L20 0" /></svg></button>
        <button aria-label="Insert function" className="ml-3 font-['Liberation_Serif'] text-[23px] leading-none text-[#d6d6d6] italic">fx</button>
        <span className="ml-auto pr-px"><Chev s={13} w={1} c="#aaa" /></span>
      </div>
      <div className="relative flex flex-1">
        <textarea aria-label="Formula bar" defaultValue="Function" className="h-[54px] flex-1 resize-none rounded-[5px] border border-[#5f5f5f] bg-[#292929] px-3 py-[3px] text-[16px] leading-[22px]" />
        <button aria-label="Collapse formula bar" className="absolute top-[6px] right-[5px]"><Chev s={13} w={1} c="#ccc" up /></button>
      </div>
    </div>
  );
}

function Canvas() {
  return (
    <main className="relative min-w-0 flex-1 overflow-hidden bg-white">
      <Sheet />
      <div className="absolute top-[92px] left-[1455px] h-[18px] w-[148px] border-2 border-[#217346]"><span className="absolute -right-[3px] -bottom-[3px] size-[5px] bg-[#217346]" /></div>
      <Slicer title="Gender" items={["Female", "Male"]} place="top-[126px] h-[216px] w-[157px]" />
      <Slicer title="Purpose of the visit" items={["Business", "Function", "Other", "Vacation"]} place="top-[344px] h-[217px] w-[158px]" />
      <Slicer title="Checkout Date (Y..." items={["2020", "2021", "2022"]} place="top-[566px] h-[217px] w-[156px]" />

      <BarChart name="Gender" place="top-[150px] left-[196px]" w={226} h={153} ticks={["0.0", "500.0", "1000.0", "1500.0"]} tickX={34} y0={105} step={24.300} axis={[43, 214]} barW={43}
        bars={[{ x: 64, top: 64, label: "Female" }, { x: 149, top: 53, label: "Male" }]}>
        <FieldButton text="Count of ID" place="top-[6px] left-2 w-[57px]" />
        <FieldButton text="Gender" drop place="top-[131px] left-2 w-[49px]" />
      </BarChart>
      <BarChart name="NPS" place="top-[145px] left-[446px]" w={247} h={194} ticks={["0.0", "200.0", "400.0", "600.0", "800.0", "1000.0"]} tickX={35} y0={146} step={22.600} axis={[43, 235]} barW={32}
        bars={[{ x: 59, top: 90, label: "Detractors" }, { x: 123, top: 87, label: "Passives" }, { x: 187, top: 42, label: "Promoters" }]}>
        <FieldButton text="Count of ID" place="top-[6px] left-2 w-[58px]" />
        <FieldButton text="NPS_Category" drop place="top-[172px] left-2 w-[80px]" />
      </BarChart>
      <BarChart name="Source" slant place="top-[206px] left-[1059px]" w={281} h={223} ticks={["0.0", "100.0", "200.0", "300.0", "400.0", "500.0", "600.0", "700.0", "800.0", "900.0"]} tickX={29} y0={129} step={13.100} axis={[38, 269]} barW={17}
        bars={[{ x: 46, top: 27, label: "Organization" }, { x: 79, top: 89, label: "hotel booking sites" }, { x: 112, top: 93, label: "Word of mouth" }, { x: 145, top: 98, label: "Search engine" }, { x: 178, top: 109, label: "Internet advertisement" }, { x: 211, top: 114, label: "Television advertisement" }, { x: 244, top: 119, label: "News paper" }]} />
      <BarChart name="Purpose" place="top-[157px] left-[1391px]" w={289} h={220} ticks={["0.0", "100.0", "200.0", "300.0", "400.0", "500.0", "600.0", "700.0", "800.0", "900.0"]} tickX={29} y0={194} step={20.300} axis={[38, 277]} barW={30}
        bars={[{ x: 53, top: 26, label: "Business" }, { x: 113, top: 53, label: "Vacation" }, { x: 172, top: 135, label: "Function" }, { x: 232, top: 167, label: "Other" }]} />
      <RadarChart />
      <div role="tooltip" className="absolute top-[583px] left-[987px] rounded-[3px] border border-[#e0e0e0] bg-[#fbfbfb] px-[5px] text-[14px] leading-[23px] text-[#575757] shadow-[2px_2px_2px_rgba(0,0,0,0.500)]">Chart Area</div>
    </main>
  );
}

function SheetTabs() {
  const tab = "flex h-6 items-center border-l border-[#5c5c5c] px-[15px]";
  return (
    <div className="relative flex h-10 shrink-0 border-b border-[#3a3a38] bg-[#0f0f0d] text-[17px] text-white">
      <div className="flex w-[141px] items-center pl-8">
        <button aria-label="Previous sheet"><svg width="8" height="12" viewBox="0 0 8 12" fill="none" stroke="#ccc" strokeWidth="1.300"><path d="M7 1L2 6l5 5" /></svg></button>
        <button aria-label="Next sheet" className="ml-8"><svg width="8" height="12" viewBox="0 0 8 12" fill="none" stroke="#999" strokeWidth="1.300"><path d="M1 1l5 5-5 5" /></svg></button>
        <button aria-label="More sheets" className="ml-7"><svg width="15" height="4" viewBox="0 0 15 4" fill="#ccc"><circle cx="2" cy="2" r="2" /><circle cx="7.500" cy="2" r="2" /><circle cx="13" cy="2" r="2" /></svg></button>
      </div>
      <button className="mr-[5px] h-[35px] rounded-b-[5px] bg-white px-[10px] text-[#222]"><span className="block border-b-2 border-[#217346] leading-[27px]">PivotTables</span></button>
      <div className="flex items-center pt-px">
        <button className={tab}>Dashboard</button>
        <button className={tab}>Guest_Data</button>
        <button className={tab}>Ref</button>
        <span className="h-6 w-px bg-[#5c5c5c]" />
        <button aria-label="New sheet" className="ml-[51px]"><svg width="15" height="15" viewBox="0 0 15 15" stroke="#ccc" strokeWidth="1.500"><path d="M7.500 0v15M0 7.500h15" /></svg></button>
      </div>
      <div className="ml-auto flex w-[765px] items-center">
        <span className="mr-[24px] flex flex-col gap-[2px]"><i className="size-[3px] bg-[#ccc]" /><i className="size-[3px] bg-[#ccc]" /><i className="size-[3px] bg-[#ccc]" /></span>
        <div className="mr-[29px] flex h-[22px] flex-1 items-center rounded-full bg-[#141412]">
          <button aria-label="Scroll left"><svg width="8" height="11" viewBox="0 0 8 11" fill="#9a9a9a"><path d="M8 0v11L0 5.500z" /></svg></button>
          <div className="mx-[6px] flex flex-1"><span className="h-[11px] flex-[496] rounded-full bg-[#999]" /><span className="flex-[184]" /></div>
          <button aria-label="Scroll right"><svg width="8" height="11" viewBox="0 0 8 11" fill="#9a9a9a"><path d="M0 0v11l8-5.500z" /></svg></button>
        </div>
      </div>
      <div className="pointer-events-none absolute inset-x-0 top-0 h-[60px] overflow-hidden text-center">
        <span lang="ar" dir="rtl" className="block font-['DejaVu_Sans'] text-[62px] leading-[44px] font-bold text-[#5e5e5e]">خمسات</span>
      </div>
    </div>
  );
}

function StatusBar() {
  return (
    <footer className="flex h-7 shrink-0 items-center bg-[#141412] text-[13px] text-white">
      <span className="ml-[14px]">Ready</span>
      <button className="ml-[25px] flex items-center gap-1 font-semibold">
        <svg width="18" height="18" viewBox="0 0 18 18" fill="none" stroke="#e0e0e0" strokeWidth="1.300"><circle cx="7.500" cy="3" r="2" /><path d="M1 4c-1 2 2 2 4 3l-1 5-2 4c1 2 2 1 3-1l2-4M14 4c1 2-2 2-4 3v3M9.500 10.500l7 7M16.500 10.500l-7 7" /></svg>
        Accessibility: Investigate
      </button>
      <div className="ml-auto flex items-center gap-[18px]"><span>Average: 292</span><span>Count: 2</span><span>Sum: 292</span></div>
      <div className="ml-[23px] flex">
        <button aria-label="Normal view" className="flex h-7 w-[50px] items-center justify-center bg-[#272a2b]"><svg width="17" height="17" viewBox="0 0 17 17" fill="none" stroke="#fff" strokeWidth="1.500"><path d="M1 1h15v15H1zM6 1v15M11 1v15M1 6h15M1 11h15" /></svg></button>
        <button aria-label="Page layout view" className="flex h-7 w-[50px] items-center justify-center"><svg width="17" height="17" viewBox="0 0 17 17" fill="none" stroke="#ddd" strokeWidth="1.500"><path d="M1 1h15v15H1zM4.500 4h8v9h-8zM6 6.500h5M6 8.500h5M6 10.500h5" strokeWidth="1.300" /></svg></button>
        <button aria-label="Page break view" className="flex h-7 w-[50px] items-center justify-center"><svg width="17" height="17" viewBox="0 0 17 17" fill="none" stroke="#ddd" strokeWidth="1.500"><path d="M1 1h15v15H1zM1 10h10V1M6 1v9" /></svg></button>
      </div>
      <button aria-label="Zoom out" className="ml-[7px] flex h-7 w-[10px] items-center"><span className="h-px w-[10px] bg-white" /></button>
      <div className="relative mx-[6px] flex h-7 w-[125px] items-center">
        <span className="absolute left-[62px] h-2 w-px bg-[#999]" />
        <input type="range" aria-label="Zoom" min={10} max={190} defaultValue={67} className="h-px w-full appearance-none bg-[#8a8a8a] [&::-webkit-slider-thumb]:h-[14px] [&::-webkit-slider-thumb]:w-[6px] [&::-webkit-slider-thumb]:appearance-none [&::-webkit-slider-thumb]:bg-[#b5b5b5]" />
      </div>
      <button aria-label="Zoom in"><svg width="10" height="10" viewBox="0 0 10 10" stroke="#fff"><path d="M5 0v10M0 5h10" /></svg></button>
      <span className="mr-3 ml-4 w-[25px] whitespace-nowrap">66%</span>
    </footer>
  );
}

export default function App() {
  return (
    <div className="flex h-screen flex-col overflow-hidden bg-[#1c1a16] bg-[linear-gradient(90deg,#23241e_0%,#1f2426_22%,#1d2020_35%,#1b1914_55%)] font-['Open_Sans',sans-serif]">
      <TitleBar />
      <TabRow />
      <Ribbon />
      <FormulaBar />
      <div className="flex min-h-0 flex-1">
        <Canvas />
        <div className="flex w-[26px] shrink-0 flex-col items-center bg-[#141412] pt-[7px] pb-[3px]">
          <button aria-label="Scroll up"><svg width="11" height="9" viewBox="0 0 11 9" fill="#9a9a9a"><path d="M0 9h11L5.500 0z" /></svg></button>
          <div className="my-2 flex w-[11px] flex-1 flex-col"><span className="flex-[434] rounded-full bg-[#999]" /><span className="flex-[241]" /></div>
          <button aria-label="Scroll down"><svg width="11" height="9" viewBox="0 0 11 9" fill="#9a9a9a"><path d="M0 0h11L5.500 9z" /></svg></button>
        </div>
      </div>
      <SheetTabs />
      <StatusBar />
    </div>
  );
}
